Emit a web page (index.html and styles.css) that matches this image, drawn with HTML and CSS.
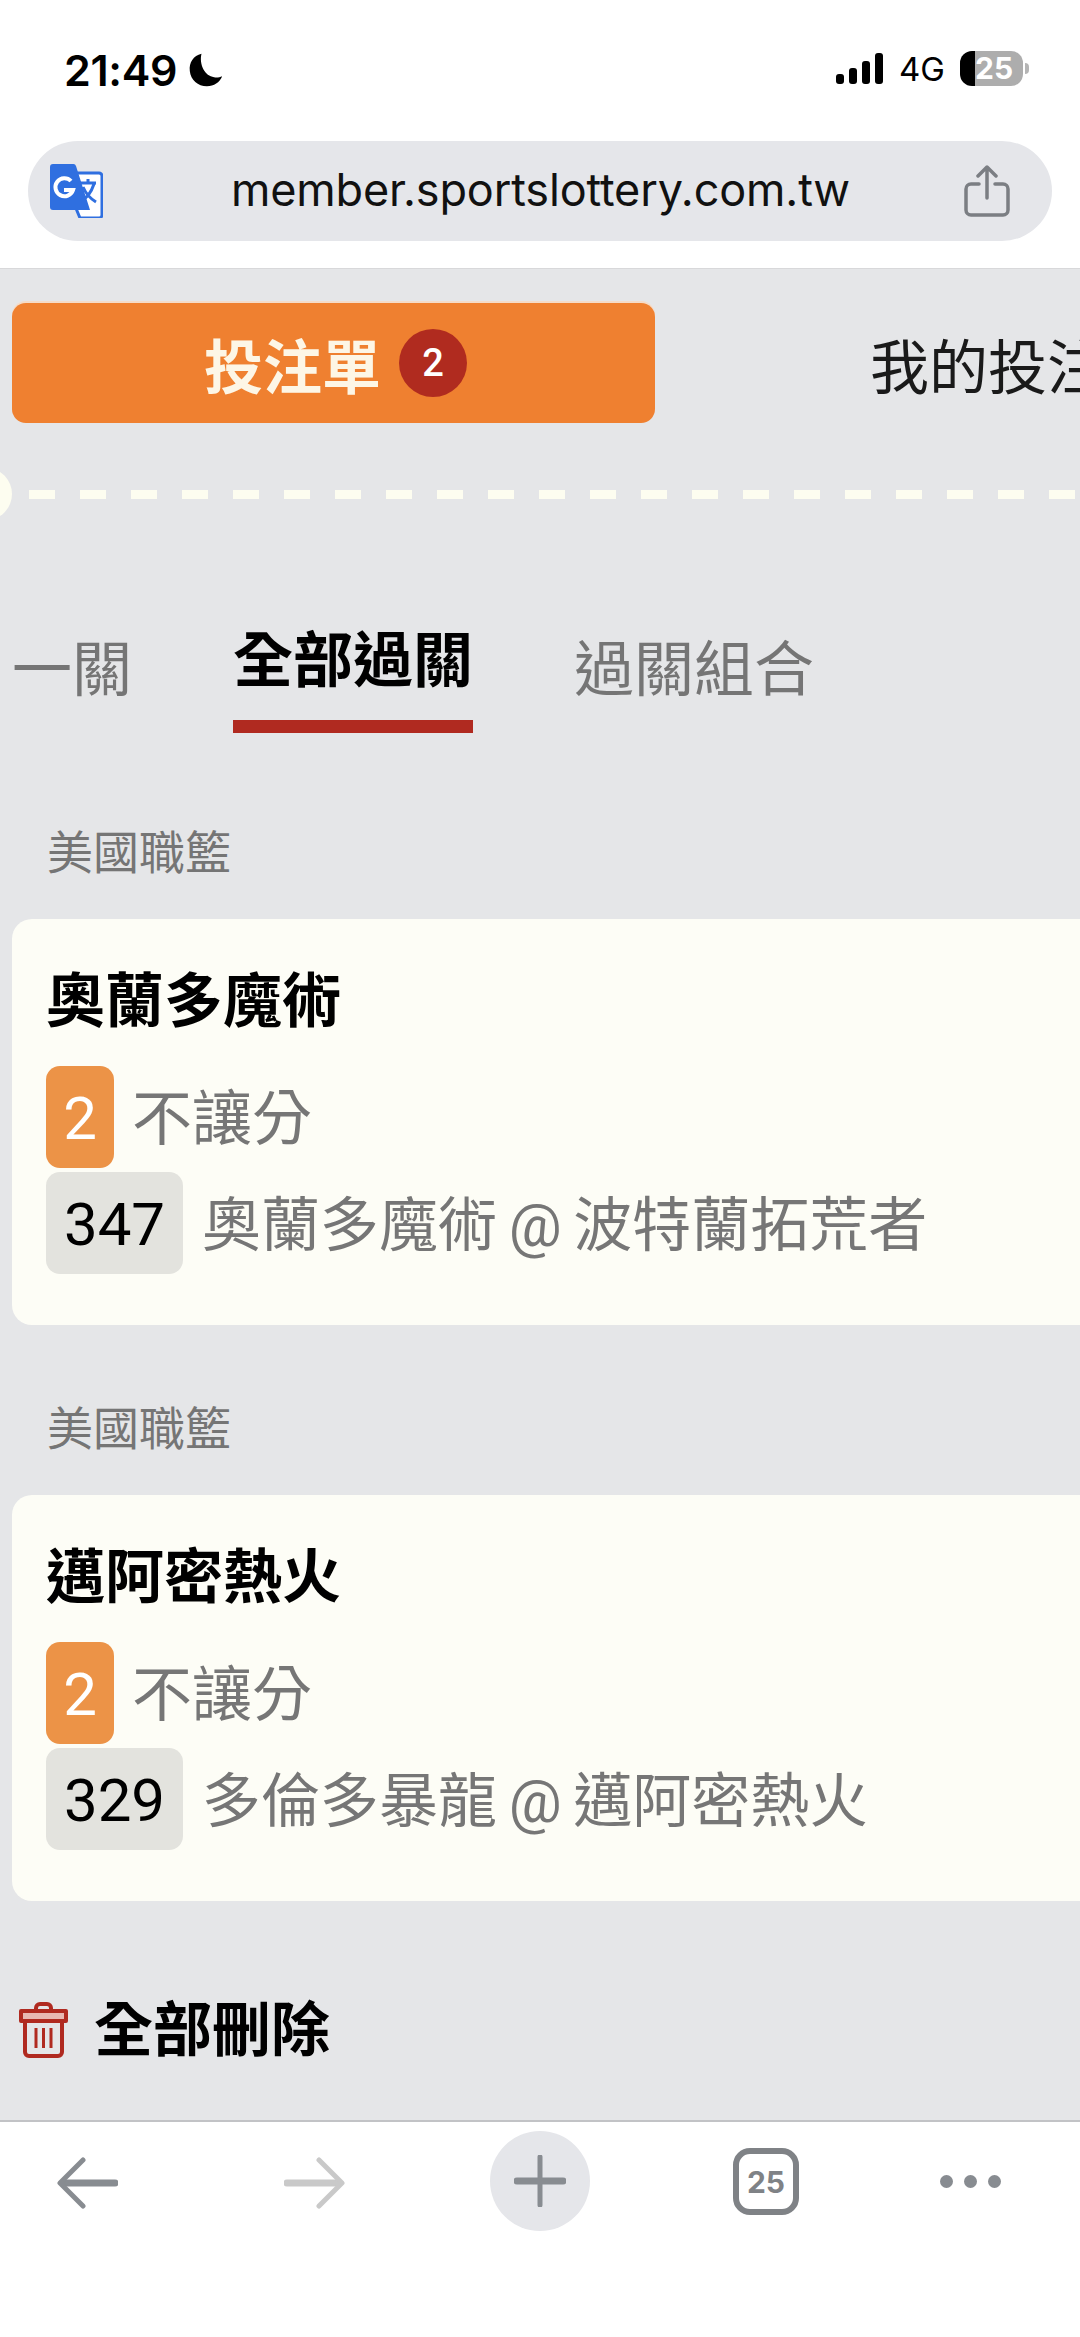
FILE: index.html
```html
<!DOCTYPE html>
<html>
<head>
	<meta charset="UTF-8">
	<title>投注單</title>
	<link rel="stylesheet" href="styles.css">
</head>
<body>
<div class="screen">

	<header class="browser-top">
		<div class="status-bar">
			<div class="status-left">
				<span class="clock">21:49</span>
				<svg class="moon" viewBox="0 0 40 40"><path d="M15 2C6 4 1 12 2 21c1 10 9 17 19 17 8 0 14-4 17-11-3 1-6 2-9 1C19 27 12 14 15 2z" fill="#000"/></svg>
			</div>
			<div class="status-right">
				<div class="signal"><i class="b1"></i><i class="b2"></i><i class="b3"></i><i class="b4"></i></div>
				<span class="net">4G</span>
				<div class="battery">25</div>
				<i class="battery-nub"></i>
			</div>
		</div>
		<div class="url-bar">
			<svg class="translate-icon" viewBox="0 0 53 54">
				<path d="M22 9h27a3 3 0 0 1 3 3v39a3 3 0 0 1-3 3H30l-5-12z" fill="#fff" stroke="#2f6fe0" stroke-width="3"/>
				<path d="M3 0h20a3 3 0 0 1 3 2l14 44H3a3 3 0 0 1-3-3V3a3 3 0 0 1 3-3z" fill="#2f6fe0"/>
				<path d="M21 17a9 9 0 1 0 2 9h-9" fill="none" stroke="#fff" stroke-width="4"/>
				<path d="M30 19h16M38 15v4M44 20c-3 9-7 14-13 17M33 23c3 7 8 12 13 15" fill="none" stroke="#2f6fe0" stroke-width="3"/>
			</svg>
			<span class="url-text">member.sportslottery.com.tw</span>
			<svg class="share-icon" viewBox="0 0 46 52">
				<path d="M15 19H7a5 5 0 0 0-5 5v21a5 5 0 0 0 5 5h32a5 5 0 0 0 5-5V24a5 5 0 0 0-5-5h-8" fill="none" stroke="#7b7e83" stroke-width="3.5" stroke-linecap="round"/>
				<path d="M23 33V3M14 11l9-9 9 9" fill="none" stroke="#7b7e83" stroke-width="3.5" stroke-linecap="round" stroke-linejoin="round"/>
			</svg>
		</div>
	</header>

	<main class="content">
		<div class="top-tabs">
			<div class="slip-tab">
				<span>投注單</span>
				<span class="slip-count">2</span>
			</div>
			<div class="my-bets">我的投注</div>
		</div>

		<div class="dash-line"></div>

		<div class="play-tabs">
			<div class="play-tab">一關</div>
			<div class="play-tab active">全部過關</div>
			<div class="play-tab">過關組合</div>
		</div>

		<div class="league">美國職籃</div>
		<section class="bet-card">
			<h2 class="bet-team">奧蘭多魔術</h2>
			<div class="bet-row">
				<span class="tag tag-orange">2</span>
				<span class="bet-text">不讓分</span>
			</div>
			<div class="bet-row">
				<span class="tag tag-grey">347</span>
				<span class="bet-text match">奧蘭多魔術 @ 波特蘭拓荒者</span>
			</div>
		</section>

		<div class="league">美國職籃</div>
		<section class="bet-card">
			<h2 class="bet-team">邁阿密熱火</h2>
			<div class="bet-row">
				<span class="tag tag-orange">2</span>
				<span class="bet-text">不讓分</span>
			</div>
			<div class="bet-row">
				<span class="tag tag-grey">329</span>
				<span class="bet-text match">多倫多暴龍 @ 邁阿密熱火</span>
			</div>
		</section>

		<div class="delete-all">
			<svg class="trash-icon" viewBox="0 0 49 56">
				<path d="M17 9V6a4 4 0 0 1 4-4h7a4 4 0 0 1 4 4v3" fill="none" stroke="#b02a20" stroke-width="4"/>
				<path d="M2 9h45v10H2z" fill="#e8b8b2" stroke="#b02a20" stroke-width="4" stroke-linejoin="round"/>
				<path d="M6 19v31a4 4 0 0 0 4 4h29a4 4 0 0 0 4-4V19" fill="none" stroke="#b02a20" stroke-width="4"/>
				<path d="M17 26v20M24.500 26v20M32 26v20" fill="none" stroke="#b02a20" stroke-width="3"/>
			</svg>
			<span>全部刪除</span>
		</div>
	</main>

	<footer class="toolbar">
		<svg class="tool-back" viewBox="0 0 61 52">
			<path d="M58 26H6" stroke="#888c91" stroke-width="7" stroke-linecap="round"/>
			<path d="M26 3L3 26l23 23" fill="none" stroke="#888c91" stroke-width="5" stroke-linecap="round" stroke-linejoin="round"/>
		</svg>
		<svg class="tool-forward" viewBox="0 0 61 52">
			<path d="M3 26h52" stroke="#c9c9c9" stroke-width="7" stroke-linecap="round"/>
			<path d="M35 3l23 23-23 23" fill="none" stroke="#c9c9c9" stroke-width="5" stroke-linecap="round" stroke-linejoin="round"/>
		</svg>
		<div class="tool-new">
			<svg viewBox="0 0 52 52">
				<path d="M26 2v48" stroke="#888c91" stroke-width="5" stroke-linecap="round"/>
				<path d="M3 26h46" stroke="#888c91" stroke-width="7" stroke-linecap="round"/>
			</svg>
		</div>
		<div class="tool-tabs">25</div>
		<div class="tool-more"><i></i><i></i><i></i></div>
	</footer>

</div>
</body>
</html>
```

FILE: styles.css
```css
html, body {
	margin: 0;
	padding: 0;
	background: #fff;
}

body {
	font-family: Inter, "Noto Sans CJK TC", sans-serif;
}

.screen {
	width: 1080px;
	height: 2337px;
	overflow: hidden;
	display: flex;
	flex-direction: column;
}

/* browser chrome */
.browser-top {
	height: 268px;
	flex: none;
	background: #fff;
	border-bottom: 1px solid #d8d8da;
}

.status-bar {
	height: 141px;
	display: flex;
	justify-content: space-between;
	padding: 48px 51px 0 64px;
	box-sizing: border-box;
}

.status-left {
	display: flex;
	align-items: flex-start;
	gap: 11px;
}

.clock {
	font-size: 43px;
	line-height: 44px;
	font-weight: 600;
	color: #000;
	letter-spacing: -0.3px;
}

.moon {
	width: 36px;
	height: 36px;
	margin-top: 4px;
}

.status-right {
	display: flex;
	align-items: flex-start;
	height: 40px;
}

.signal {
	display: flex;
	align-items: flex-end;
	gap: 5px;
	height: 31px;
	margin-top: 5px;
}

.signal i {
	display: block;
	width: 8px;
	border-radius: 3px;
	background: #000;
}

.signal .b1 { height: 10px; }
.signal .b2 { height: 16px; }
.signal .b3 { height: 23px; }
.signal .b4 { height: 31px; }

.net {
	margin-left: 16px;
	margin-top: 3px;
	font-size: 33px;
	line-height: 36px;
	color: #000;
}

.battery {
	width: 63px;
	height: 35px;
	margin-left: 15px;
	margin-top: 3px;
	padding-left: 15px;
	box-sizing: border-box;
	border-radius: 12px;
	background: linear-gradient(90deg, #000 15px, #adadad 15px);
	color: #fff;
	font-size: 30px;
	font-weight: 700;
	line-height: 35px;
}

.battery-nub {
	display: block;
	width: 4px;
	height: 11px;
	margin: 15px 0 0 2px;
	border-radius: 0 4px 4px 0;
	background: #b5b5b5;
}

.url-bar {
	height: 100px;
	margin: 0 28px;
	padding: 0 42px 0 22px;
	box-sizing: border-box;
	border-radius: 50px;
	background: #e5e6ea;
	display: flex;
	align-items: center;
}

.translate-icon {
	width: 53px;
	height: 54px;
	flex: none;
}

.url-text {
	flex: 1;
	text-align: center;
	font-size: 45px;
	line-height: 52px;
	color: #111;
	letter-spacing: -0.15px;
	padding: 0 0 2px 14px;
}

.share-icon {
	width: 46px;
	height: 52px;
	flex: none;
}

/* page content */
.content {
	height: 1851px;
	flex: none;
	overflow: hidden;
	background: #e5e6e8;
}

.top-tabs {
	display: flex;
	align-items: center;
	margin-top: 34px;
	padding-left: 12px;
	height: 120px;
	white-space: nowrap;
}

.slip-tab {
	width: 643px;
	height: 120px;
	flex: none;
	display: flex;
	align-items: center;
	justify-content: center;
	gap: 18px;
	padding-left: 4px;
	box-sizing: border-box;
	border-radius: 14px;
	background: #ef8030;
	box-shadow: 0 -2px 0 #f5dcc8;
	color: #fdf6e6;
	font-size: 59px;
	font-weight: 700;
}

.slip-count {
	width: 68px;
	height: 68px;
	border-radius: 50%;
	background: #b02b1f;
	color: #fff;
	font-family: Roboto, sans-serif;
	font-size: 38px;
	font-weight: 500;
	line-height: 68px;
	text-align: center;
}

.my-bets {
	margin-left: 215px;
	font-size: 59px;
	color: #1a1a1a;
	flex: none;
}

.dash-line {
	position: relative;
	height: 9px;
	margin-top: 67px;
	background: repeating-linear-gradient(90deg, #fdfdf0 0 26px, transparent 26px 51px) 29px 0 no-repeat;
}

.dash-line::before {
	content: "";
	position: absolute;
	left: -40px;
	top: -22px;
	width: 52px;
	height: 52px;
	border-radius: 50%;
	background: #fdfdf0;
}

.play-tabs {
	display: flex;
	align-items: flex-start;
	margin-top: 126px;
	padding-left: 12px;
	gap: 101px;
}

.play-tab {
	font-size: 60px;
	line-height: 70px;
	padding-top: 9px;
	color: #757575;
	white-space: nowrap;
}

.play-tab.active {
	padding-top: 0;
	padding-bottom: 25px;
	border-bottom: 13px solid #b02a20;
	color: #000;
	font-weight: 700;
}

.league {
	margin: 89px 0 37px 47px;
	font-size: 46px;
	line-height: 60px;
	color: #757575;
}

.bet-card + .league {
	margin-top: 73px;
}

.bet-card {
	margin-left: 12px;
	width: 1100px;
	height: 406px;
	padding: 47px 0 0 34px;
	box-sizing: border-box;
	border-radius: 20px;
	background: #fdfdf6;
}

.bet-team {
	margin: 0 0 30px;
	font-size: 59px;
	line-height: 70px;
	font-weight: 700;
	color: #000;
}

.bet-row {
	display: flex;
	align-items: center;
	height: 102px;
	margin-bottom: 4px;
}

.tag {
	height: 102px;
	padding-top: 2px;
	box-sizing: border-box;
	display: flex;
	align-items: center;
	justify-content: center;
	flex: none;
	border-radius: 14px;
	font-family: Roboto, sans-serif;
	font-size: 60px;
}

.tag-orange {
	width: 68px;
	background: #ec9347;
	color: #fff;
}

.tag-grey {
	width: 137px;
	background: #e3e3de;
	color: #000;
}

.bet-text {
	margin-left: 18px;
	padding-top: 5px;
	font-family: Roboto, "Noto Sans CJK TC", sans-serif;
	font-size: 60px;
	line-height: 70px;
	color: #767676;
	white-space: nowrap;
}

.bet-text.match {
	margin-left: 19px;
	font-size: 59px;
	word-spacing: -3px;
}

.delete-all {
	display: flex;
	align-items: center;
	gap: 26px;
	margin-top: 94px;
	padding-left: 19px;
	font-size: 59px;
	font-weight: 700;
	line-height: 70px;
	color: #000;
}

.trash-icon {
	width: 49px;
	height: 56px;
	flex: none;
}

/* bottom toolbar */
.toolbar {
	flex: 1;
	display: flex;
	align-items: flex-start;
	padding-left: 57px;
	background: #fff;
	border-top: 2px solid #c2c3c6;
}

.tool-back, .tool-forward {
	width: 61px;
	height: 52px;
	margin-top: 35px;
	flex: none;
}

.tool-forward {
	margin-left: 166px;
}

.tool-new {
	width: 100px;
	height: 100px;
	margin: 9px 0 0 145px;
	border-radius: 50%;
	background: #e5e6ea;
	display: flex;
	align-items: center;
	justify-content: center;
	flex: none;
}

.tool-new svg {
	width: 52px;
	height: 52px;
}

.tool-tabs {
	width: 66px;
	height: 67px;
	margin: 26px 0 0 143px;
	box-sizing: border-box;
	border: 6px solid #7f8286;
	border-radius: 17px;
	color: #7f8286;
	font-size: 30px;
	font-weight: 700;
	line-height: 56px;
	text-align: center;
	flex: none;
}

.tool-more {
	display: flex;
	gap: 11px;
	margin: 53px 0 0 141px;
	flex: none;
}

.tool-more i {
	display: block;
	width: 13px;
	height: 13px;
	border-radius: 50%;
	background: #888c91;
}
```
